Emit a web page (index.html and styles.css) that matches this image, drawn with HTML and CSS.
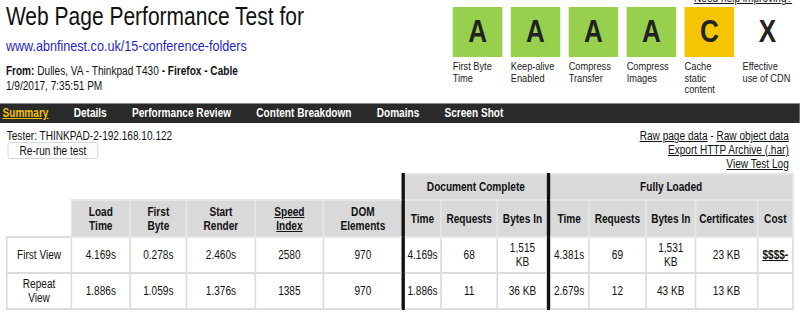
FILE: index.html
```html
<!DOCTYPE html>
<html lang="en">
<head>
    <meta charset="UTF-8">
    <title>WebPagetest Test Result</title>
    <link rel="stylesheet" href="styles.css">
</head>
<body>
<div class="page">
    <div class="header">
        <div class="test-info">
            <h1>Web Page Performance Test for</h1>
            <a class="test-url" href="#">www.abnfinest.co.uk/15-conference-folders</a>
            <p class="test-meta">
                <b>From:</b> Dulles, VA - Thinkpad T430 <b>- Firefox - Cable</b><br>
                1/9/2017, 7:35:51 PM
            </p>
        </div>
        <div class="grades">
            <a class="help-link" href="#">Need help improving?</a>
            <ul>
                <li><span class="grade grade-a">A</span>First Byte Time</li>
                <li><span class="grade grade-a">A</span>Keep-alive Enabled</li>
                <li><span class="grade grade-a">A</span>Compress Transfer</li>
                <li><span class="grade grade-a">A</span>Compress Images</li>
                <li><span class="grade grade-c">C</span>Cache static content</li>
                <li><span class="grade grade-x">X</span>Effective use of CDN</li>
            </ul>
        </div>
    </div>

    <!-- tabs -->
    <div class="tabs">
        <a class="current" href="#">Summary</a>
        <a href="#">Details</a>
        <a href="#">Performance Review</a>
        <a href="#">Content Breakdown</a>
        <a href="#">Domains</a>
        <a href="#">Screen Shot</a>
    </div>

    <div class="test-bar">
        <div class="tester">
            Tester: THINKPAD-2-192.168.10.122
            <button>Re-run the test</button>
        </div>
        <div class="downloads">
            <a href="#">Raw page data</a> - <a href="#">Raw object data</a><br>
            <a href="#">Export HTTP Archive (.har)</a><br>
            <a href="#">View Test Log</a>
        </div>
    </div>

    <table class="results">
        <colgroup>
            <col style="width:77px">
            <col style="width:70px">
            <col style="width:67px">
            <col style="width:82px">
            <col style="width:81px">
            <col style="width:95px">
            <col style="width:45px">
            <col style="width:67px">
            <col style="width:61px">
            <col style="width:48px">
            <col style="width:68px">
            <col style="width:59px">
            <col style="width:74px">
            <col style="width:42px">
        </colgroup>
        <tr class="group-row">
            <td class="blank" colspan="6"></td>
            <th class="border" colspan="3">Document Complete</th>
            <th class="border" colspan="5">Fully Loaded</th>
        </tr>
        <tr class="head-row">
            <td class="blank"></td>
            <th>Load<br>Time</th>
            <th>First<br>Byte</th>
            <th>Start<br>Render</th>
            <th><a href="#">Speed<br>Index</a></th>
            <th>DOM<br>Elements</th>
            <th class="border">Time</th>
            <th>Requests</th>
            <th>Bytes In</th>
            <th class="border">Time</th>
            <th>Requests</th>
            <th>Bytes In</th>
            <th>Certificates</th>
            <th>Cost</th>
        </tr>
        <tr class="first-view">
            <td class="label">First View</td>
            <td>4.169s</td>
            <td>0.278s</td>
            <td>2.460s</td>
            <td>2580</td>
            <td>970</td>
            <td class="border">4.169s</td>
            <td>68</td>
            <td class="bytes">1,515 KB</td>
            <td class="border">4.381s</td>
            <td>69</td>
            <td class="bytes">1,531 KB</td>
            <td>23 KB</td>
            <td><a class="cost" href="#">$$$$-</a></td>
        </tr>
        <tr class="repeat-view">
            <td class="label">Repeat View</td>
            <td>1.886s</td>
            <td>1.059s</td>
            <td>1.376s</td>
            <td>1385</td>
            <td>970</td>
            <td class="border">1.886s</td>
            <td>11</td>
            <td class="bytes">36 KB</td>
            <td class="border">2.679s</td>
            <td>12</td>
            <td class="bytes">43 KB</td>
            <td>13 KB</td>
            <td></td>
        </tr>
    </table>
</div>
</body>
</html>
```

FILE: styles.css
```css
html,
body {
    overflow: hidden;
}
body {
    margin: 0;
    font-family: "Liberation Sans", Arial, sans-serif;
    font-size: 12px;
    color: #111;
    background: #fff;
}
a {
    color: #111;
}
/* the page is drawn a bit condensed */
.page {
    width: 952px;
    transform: scaleX(0.84);
    transform-origin: 0 0;
}
.header {
    display: flex;
    justify-content: space-between;
    padding: 0 9px 0 7px;
    height: 103px;
}
.test-info h1 {
    margin: 1px 0 0;
    font-size: 25px;
    font-weight: normal;
    line-height: 30px;
}
.test-url {
    display: block;
    margin-top: 6px;
    font-size: 15px;
    line-height: 18px;
    color: #1f1fbf;
    text-decoration: none;
}
.test-meta {
    margin: 9px 0 0;
    font-size: 12px;
    line-height: 15px;
}
.grades {
    display: flex;
    flex-direction: column;
    align-items: flex-end;
}
.help-link {
    margin-top: -9px;
    font-size: 12px;
    line-height: 14px;
}
.grades ul {
    display: flex;
    gap: 10px;
    margin: 2px 0 0;
    padding: 0;
    list-style: none;
}
.grades li {
    width: 59px;
    font-size: 11px;
    line-height: 11.5px;
    color: #222;
}
.grade {
    display: block;
    height: 50px;
    margin-bottom: 4px;
    font-size: 31px;
    font-weight: bold;
    line-height: 50px;
    text-align: center;
    color: #222;
}
.grade-a {
    background: #96d04d;
}
.grade-c {
    background: #f4c500;
}
.tabs {
    display: flex;
    height: 19px;
    padding-left: 3px;
    background: #2a2a2a;
    border-top: 1px solid #888;
}
.tabs a {
    margin-right: 30px;
    font-size: 12px;
    font-weight: bold;
    line-height: 19px;
    color: #fff;
    text-decoration: none;
}
.tabs a.current {
    color: #f3c300;
    text-decoration: underline;
}
.test-bar {
    display: flex;
    justify-content: space-between;
    padding: 6px 13px 0 8px;
    line-height: 14px;
}
.tester button {
    display: block;
    width: 108px;
    height: 17px;
    margin: -1px 0 0 1px;
    padding: 0;
    font-family: inherit;
    font-size: 12px;
    color: #111;
    background: #fcfcfc;
    border: 1px solid #d4d4d4;
    border-radius: 3px;
}
.downloads {
    text-align: right;
}
.results {
    margin: 2px 0 0 7px;
    table-layout: fixed;
    border-collapse: collapse;
    font-size: 12px;
    text-align: center;
}
.results th,
.results td {
    padding: 0 2px;
    border: 2px solid #dcdcdc;
}
.results th {
    background: #d9d9d9;
    border-color: #e6e6e6;
    font-weight: bold;
    white-space: nowrap;
}
.results td.blank {
    border: none;
    background: none;
}
.results td.label {
    padding: 0 5px;
}
.results td.bytes {
    padding: 0 6px;
}
.results .group-row th {
    height: 24px;
}
.results .head-row th {
    height: 35px;
}
.results .first-view td {
    height: 34px;
}
.results .repeat-view td {
    height: 34px;
}
.results .border {
    border-left: 4px solid #111;
}
.cost {
    font-weight: bold;
}
```
